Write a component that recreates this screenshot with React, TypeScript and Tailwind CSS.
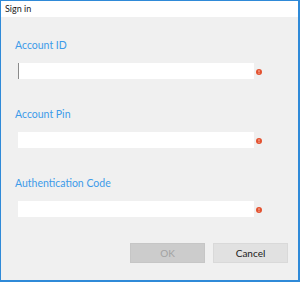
const fields = [
  { label: "Account ID", focused: true },
  { label: "Account Pin", focused: false },
  { label: "Authentication Code", focused: false },
];

function ErrorDot() {
  return (
    <svg width="6" height="6" viewBox="0 0 6 6" className="ml-[2px] mt-[2px] shrink-0">
      <circle cx="3" cy="3" r="3" fill="#e3512f" />
      <rect x="2.5" y="1.2" width="1" height="2.2" fill="#fbc3b2" />
      <rect x="2.5" y="4" width="1" height="0.8" fill="#fbc3b2" />
    </svg>
  );
}

export default function App() {
  return (
    <div
      className="flex h-[282px] w-[300px] flex-col border-b-2 border-l border-r-2 border-t border-[#2f8ad8] bg-[#f0f0f0]"
      style={{ fontFamily: "Lato, 'Segoe UI', sans-serif" }}
    >
      <div className="h-[16px] shrink-0 bg-white pl-[4px] text-[9px] leading-[16px] text-[#1a1a1a]">
        Sign in
      </div>

      <div className="flex flex-1 flex-col pl-[14px] pr-[10px] pt-[22px]">
        {fields.map((f, i) => (
          <div key={f.label} className={i > 0 ? "mt-[29px]" : ""}>
            <div className="text-[10.5px] leading-[13px] text-[#3d9be9]">{f.label}</div>
            <div className="ml-[3px] mt-[11px] flex items-center">
              <div
                className={
                  "h-[16px] w-[236px] bg-white" +
                  (f.focused ? " border-l border-[#8a8a8a]" : "")
                }
              />
              <ErrorDot />
            </div>
          </div>
        ))}

        <div className="mt-[26px] flex justify-end gap-[8px]">
          <button className="h-[20px] w-[75px] border border-[#c6c6c6] bg-[#cccccc] text-[10px] text-[#a2a2a2]">
            OK
          </button>
          <button className="h-[20px] w-[75px] border border-[#d9d9d9] bg-[#e1e1e1] text-[10px] text-[#1a1a1a]">
            Cancel
          </button>
        </div>
      </div>
    </div>
  );
}
